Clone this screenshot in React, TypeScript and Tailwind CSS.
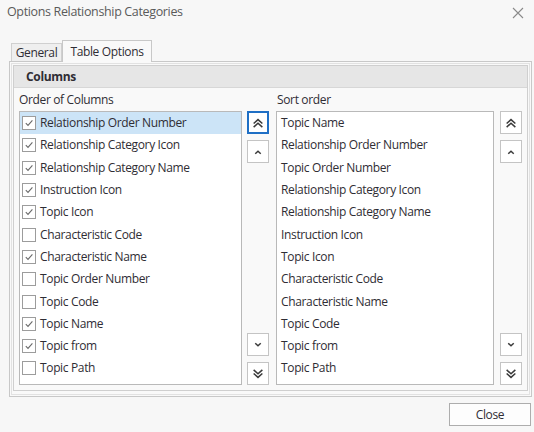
import React from "react";

const leftRows: { label: string; checked: boolean }[] = [
  { label: "Relationship Order Number", checked: true },
  { label: "Relationship Category Icon", checked: true },
  { label: "Relationship Category Name", checked: true },
  { label: "Instruction Icon", checked: true },
  { label: "Topic Icon", checked: true },
  { label: "Characteristic Code", checked: false },
  { label: "Characteristic Name", checked: true },
  { label: "Topic Order Number", checked: false },
  { label: "Topic Code", checked: false },
  { label: "Topic Name", checked: true },
  { label: "Topic from", checked: true },
  { label: "Topic Path", checked: false },
];

const sortRows = [
  "Topic Name",
  "Relationship Order Number",
  "Topic Order Number",
  "Relationship Category Icon",
  "Relationship Category Name",
  "Instruction Icon",
  "Topic Icon",
  "Characteristic Code",
  "Characteristic Name",
  "Topic Code",
  "Topic from",
  "Topic Path",
];

function Chevron({ dir, double }: { dir: "up" | "down"; double?: boolean }) {
  const flip = dir === "down" ? "rotate(180 6 6)" : undefined;
  return (
    <svg width="12" height="12" viewBox="0 0 12 12" fill="none">
      <g transform={flip} stroke="#3a3a3a" strokeWidth={1.5} strokeLinecap="square">
        {double ? (
          <>
            <path d="M2.2 6 L6 2.6 L9.8 6" />
            <path d="M2.2 9.6 L6 6.2 L9.8 9.6" />
          </>
        ) : (
          <path d="M3.8 7.2 L6 5.2 L8.2 7.2" />
        )}
      </g>
    </svg>
  );
}

function MoveButton({
  dir,
  double,
  focused,
}: {
  dir: "up" | "down";
  double?: boolean;
  focused?: boolean;
}) {
  return (
    <button
      className={`w-[22px] h-[23px] flex items-center justify-center bg-white ${
        focused ? "border-2 border-[#1f6fc5]" : "border border-[#c4c4c4]"
      }`}
    >
      <Chevron dir={dir} double={double} />
    </button>
  );
}

function ButtonStack({ focusFirst }: { focusFirst?: boolean }) {
  return (
    <div className="flex flex-col justify-between h-[274px]">
      <div className="flex flex-col gap-[6px]">
        <MoveButton dir="up" double focused={focusFirst} />
        <MoveButton dir="up" />
      </div>
      <div className="flex flex-col gap-[6px]">
        <MoveButton dir="down" />
        <MoveButton dir="down" double />
      </div>
    </div>
  );
}

function CheckBox({ checked }: { checked: boolean }) {
  return (
    <span className="w-[14px] h-[14px] border border-[#9c9c9c] bg-white flex items-center justify-center shrink-0">
      {checked && (
        <svg width="10" height="10" viewBox="0 0 10 10" fill="none">
          <path d="M1.8 5.2 L4 7.4 L8.4 2.4" stroke="#6a6a6a" strokeWidth={1.1} />
        </svg>
      )}
    </span>
  );
}

export default function App() {
  return (
    <div
      className="w-[534px] h-[432px] bg-[#f7f7f7] text-[#2f2d34] text-[12px] tracking-[-0.35px] overflow-hidden"
      style={{ fontFamily: '"Open Sans", "Noto Sans", sans-serif' }}
    >
      {/* Title bar */}
      <div className="h-[25px] flex items-center justify-between pl-[7px] pr-[10px]">
        <span className="text-[12.5px] text-[#5a5a5a]">Options Relationship Categories</span>
        <svg width="12" height="12" viewBox="0 0 12 12" className="mt-[1px]">
          <path d="M1 1 L11 11 M11 1 L1 11" stroke="#8a8a8a" strokeWidth={1.1} />
        </svg>
      </div>

      {/* Tabs */}
      <div className="flex items-end pl-[11px] mt-[15px] h-[21px]">
        <div className="h-[18px] w-[51px] border border-b-0 border-[#d0d0d0] bg-[#efefef] flex items-center justify-center">
          General
        </div>
        <div className="relative z-10 -mb-px h-[22px] w-[90px] border border-b-0 border-[#c8c8c8] bg-[#f9f9f9] flex items-center justify-center">
          Table Options
        </div>
      </div>

      {/* Tab panel */}
      <div className="ml-[9px] w-[523px] h-[336px] border border-[#c8c8c8] p-px bg-[#f9f9f9]">
        <div className="h-full border border-[#e2e2e2] p-px">
          {/* Group box */}
          <div className="h-[326px] border border-[#cfcfcf] bg-[#f9f9f9]">
            <div className="h-[22px] bg-[#e6e6e6] border-b border-[#d7d7d7] flex items-center pl-[12px] font-bold">
              Columns
            </div>
            <div className="flex pl-[5px] pt-[1px]">
              {/* Order of columns */}
              <div className="flex flex-col">
                <div className="h-[22px] flex items-center">Order of Columns</div>
                <div className="w-[223px] h-[274px] border border-[#b9b9b9] bg-white">
                  {leftRows.map((r, i) => (
                    <div
                      key={r.label}
                      className={`h-[22.3px] flex items-center gap-[4px] pl-[2px] ${
                        i === 0 ? "bg-[#cce4f7]" : ""
                      }`}
                    >
                      <CheckBox checked={r.checked} />
                      <span className="whitespace-nowrap">{r.label}</span>
                    </div>
                  ))}
                </div>
              </div>

              <div className="ml-[5px] pt-[22px]">
                <ButtonStack focusFirst />
              </div>

              {/* Sort order */}
              <div className="flex flex-col ml-[7px]">
                <div className="h-[22px] flex items-center pl-px">Sort order</div>
                <div className="w-[218px] h-[274px] border border-[#b9b9b9] bg-white">
                  {sortRows.map((s) => (
                    <div key={s} className="h-[22.3px] flex items-center pl-[4px] whitespace-nowrap">
                      {s}
                    </div>
                  ))}
                </div>
              </div>

              <div className="ml-[6px] pt-[22px]">
                <ButtonStack />
              </div>
            </div>
          </div>
        </div>
      </div>

      {/* Footer */}
      <div className="flex justify-end pr-[3px] pt-[6px]">
        <button className="w-[82px] h-[23px] border border-[#adadad] bg-[#fdfdfd]">
          Close
        </button>
      </div>
    </div>
  );
}
